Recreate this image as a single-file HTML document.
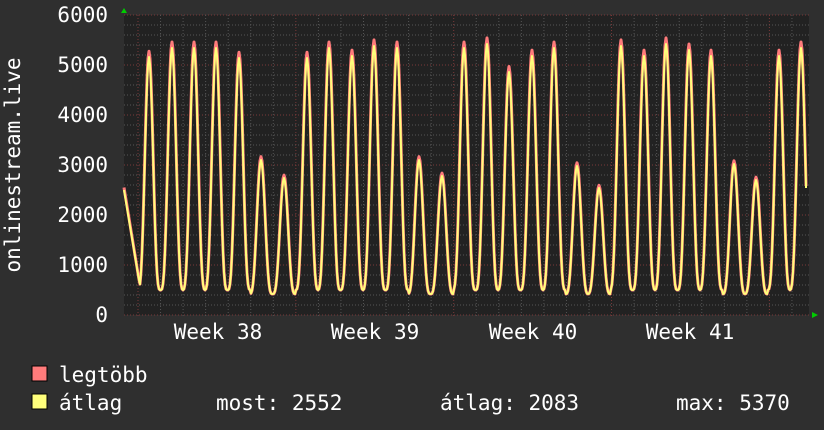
<!DOCTYPE html>
<html><head><meta charset="utf-8"><style>
body{margin:0;background:#2f2f2f;width:824px;height:430px;overflow:hidden}
svg{display:block}
text{font-family:"DejaVu Sans Mono","Liberation Mono",monospace;fill:#fff;font-size:21px}
</style></head><body>
<svg id="s" width="824" height="430" xmlns="http://www.w3.org/2000/svg">
<rect x="0" y="0" width="824" height="430" fill="#2f2f2f"/>
<rect x="124" y="15" width="685" height="300" fill="#222222"/>
<g id="grid"></g>
<polyline id="red" fill="none" stroke="#ff7b7b" stroke-width="3" stroke-linejoin="round"/>
<polyline id="yel" fill="none" stroke="#ffff7b" stroke-width="2" stroke-linejoin="round"/>
<polygon points="121,13 127,13 124,8" fill="#0c0"/>
<polygon points="812,312 812,318 818,315" fill="#0c0"/>
<g text-anchor="end">
<text x="108" y="22">6000</text><text x="108" y="72">5000</text><text x="108" y="122">4000</text>
<text x="108" y="172">3000</text><text x="108" y="222">2000</text><text x="108" y="272">1000</text>
<text x="108" y="322">0</text></g>
<text transform="translate(20,165) rotate(-90)" text-anchor="middle">onlinestream.live</text>
<g text-anchor="middle"><text x="218" y="339">Week 38</text><text x="375" y="339">Week 39</text><text x="533" y="339">Week 40</text><text x="690" y="339">Week 41</text></g>
<rect x="32" y="366" width="15" height="15" fill="#ff7b7b" stroke="#000"/>
<rect x="32" y="394" width="15" height="15" fill="#ffff7b" stroke="#000"/>
<text x="59" y="382">legtöbb</text>
<text x="59" y="410">átlag</text>
<text x="216" y="410">most: 2552</text>
<text x="440" y="410">átlag: 2083</text>
<text x="676" y="410">max: 5370</text>
</svg>
<script>
var g=document.getElementById('grid'),h='';
for(var v=0;v<=6000;v+=200){var y=315-v*0.05;var maj=v%1000==0;
h+='<line x1="124" x2="809" y1="'+y+'" y2="'+y+'" stroke="'+(maj?'#7a3a3a':'#555')+'" stroke-dasharray="1,2"/>';}
for(var i=-1;i<31;i++){var x=138+i*22.55;if(x<124||x>809)continue;var maj=((i%7)+7)%7==0;
h+='<line y1="15" y2="318" x1="'+x+'" x2="'+x+'" stroke="'+(maj?'#7a3a3a':'#555')+'" stroke-dasharray="1,2"/>';}
g.innerHTML=h;
var peaks=[149,172,194,216,239,261,284,307,329,352,374,397,419,442,464,487,509,532,554,577,599,621,644,666,689,711,734,756,779,801];
var py=[57,48,48,48,58,160,178,58,48,56,46,48,160,176,48,44,72,56,48,166,188,46,56,44,50,56,164,180,56,48];
var ys=[],rs=[];
for(var x=124;x<=806;x+=1){
 var best=0,bi=0;
 for(var k=0;k<peaks.length;k++){var d=Math.abs(x-peaks[k]);var w=1-d/11.3;if(w>best){best=w;bi=k;}}
 var base=(bi%7==5||bi%7==6)?294:290;
 var t=Math.max(0,best);var f=Math.pow(Math.sin(t*Math.PI/2),3.2);
 var y=base-(base-py[bi])*f;
 if(x<140){y=Math.min(y,190+(x-124)*6);}
 ys.push(x+','+y.toFixed(1));rs.push(x+','+(y-(base-y)*0.025).toFixed(1));
}
ys.push('806,188');rs.push('806,186');
document.getElementById('yel').setAttribute('points',ys.join(' '));
document.getElementById('red').setAttribute('points',rs.join(' '));
</script>
</body></html>
